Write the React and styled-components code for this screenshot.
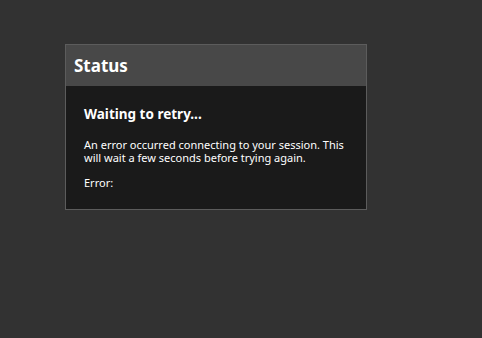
import React from 'react';
import styled, { createGlobalStyle } from 'styled-components';

const GlobalStyle = createGlobalStyle`
  html, body {
    margin: 0;
    padding: 0;
    background: #323232;
    font-family: "Noto Sans", "Open Sans", sans-serif;
  }
`;

const Page = styled.div`
  min-height: 338px;
  padding: 44px 0 0 65px;
  box-sizing: border-box;
`;

const Dialog = styled.div`
  width: 302px;
  box-sizing: border-box;
  border: 1px solid #5c5c5c;
  background: #1a1a1a;
`;

const Header = styled.div`
  height: 41px;
  display: flex;
  align-items: center;
  padding-left: 8px;
  background: #484848;
  color: #ffffff;
  font-size: 17px;
  font-weight: 700;
`;

const Body = styled.div`
  padding: 19px 18px 20px 18px;
  color: #ffffff;
`;

const Heading = styled.h2`
  margin: 0 0 15px 0;
  font-size: 13.5px;
  font-weight: 700;
`;

const Text = styled.p`
  margin: 0 0 12px 0;
  font-size: 11px;
  line-height: 13px;
  &:last-child {
    margin-bottom: 0;
  }
`;

export default function App() {
  return (
    <Page>
      <GlobalStyle />
      <Dialog>
        <Header>Status</Header>
        <Body>
          <Heading>Waiting to retry...</Heading>
          <Text>
            An error occurred connecting to your session. This will wait a few
            seconds before trying again.
          </Text>
          <Text>Error:</Text>
        </Body>
      </Dialog>
    </Page>
  );
}
